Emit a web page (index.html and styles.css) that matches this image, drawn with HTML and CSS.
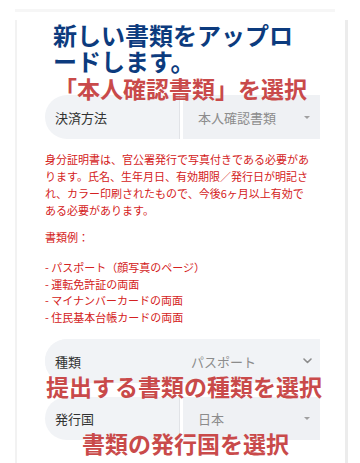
FILE: index.html
```html
<!DOCTYPE html>
<html lang="ja">
<head>
<meta charset="utf-8">
<title>書類アップロード</title>
<link rel="stylesheet" href="styles.css">
</head>
<body>
<div class="topline"></div>
<div class="card">
  <h1 class="title">新しい書類をアップロードします。</h1>

  <div class="row">
    <div class="label-cell with-divider">決済方法</div>
    <div class="select-cell gap">
      <span class="value">本人確認書類</span>
      <span class="caret"></span>
    </div>
  </div>

  <p class="note">身分証明書は、官公署発行で写真付きである必要があります。氏名、生年月日、有効期限／発行日が明記され、カラー印刷されたもので、今後6ヶ月以上有効である必要があります。</p>
  <p class="note heading">書類例：</p>
  <ul class="examples">
    <li>- パスポート（顔写真のページ）</li>
    <li>- 運転免許証の両面</li>
    <li>- マイナンバーカードの両面</li>
    <li>- 住民基本台帳カードの両面</li>
  </ul>

  <div class="row row-plain">
    <div class="label-cell">種類</div>
    <div class="select-cell plain">
      <span class="value">パスポート</span>
      <svg class="chevron" width="9" height="6" viewBox="0 0 9 6"><path d="M1 1 L4.5 4.5 L8 1" fill="none" stroke="#8c8c8c" stroke-width="1.6" stroke-linecap="round" stroke-linejoin="round"/></svg>
    </div>
  </div>

  <div class="row row-last">
    <div class="label-cell with-divider">発行国</div>
    <div class="select-cell gap">
      <span class="value">日本</span>
      <span class="caret"></span>
    </div>
  </div>

  <div class="annot annot-1">「本人確認書類」を選択</div>
  <div class="annot annot-2">提出する書類の種類を選択</div>
  <div class="annot annot-3">書類の発行国を選択</div>
</div>
</body>
</html>
```

FILE: styles.css
```css
html, body {
  margin: 0;
  padding: 0;
  background: #ffffff;
}

body {
  font-family: "Noto Sans CJK JP", "Noto Sans", sans-serif;
  width: 360px;
  height: 463px;
  overflow: hidden;
}

.topline {
  height: 3px;
  margin: 9px 25px 0 15px;
  background: #f6f6f6;
}

.card {
  position: relative;
  margin: 8px 12px 0 15px;
  border-left: 2px solid #f2f2f2;
  border-right: 3px solid #ececec;
  padding: 2px 25px 40px 28px;
}

.title {
  margin: 0 0 0 8px;
  width: 256px;
  font-size: 24px;
  line-height: 26px;
  font-weight: 700;
  color: #0c3b7e;
}

.row {
  display: flex;
  height: 44px;
  margin-top: 21px;
}

.row-plain {
  margin-top: 14px;
  background: #f1f3f6;
  border-radius: 22px 0 0 22px;
}

.row-last {
  margin-top: 14px;
  height: 43px;
}

.label-cell {
  width: 124px;
  padding-left: 10px;
  display: flex;
  align-items: center;
  font-size: 13px;
  color: #333333;
  background: #f1f3f6;
  border-radius: 22px 0 0 22px;
}

.label-cell.with-divider {
  border-right: 1px solid #e1e3e7;
}

.select-cell {
  flex: 1;
  display: flex;
  align-items: center;
  justify-content: space-between;
  background: #eff1f4;
  font-size: 13px;
  color: #8c8c8c;
}

.select-cell.gap {
  margin-left: 3px;
  padding: 0 10px 0 15px;
}

.select-cell.plain {
  padding: 0 8px 0 12px;
  background: transparent;
}

.caret {
  width: 0;
  height: 0;
  border-left: 3px solid transparent;
  border-right: 3px solid transparent;
  border-top: 3px solid #a0a0a0;
}

.chevron {
  display: block;
}

.note {
  margin: 12px 0 0 0;
  width: 267px;
  font-size: 11px;
  line-height: 17px;
  color: #d42121;
}

.note.heading {
  margin-top: 10px;
}

.examples {
  list-style: none;
  margin: 13px 0 0 0;
  padding: 0;
  font-size: 11px;
  line-height: 16.5px;
  color: #d42121;
}

.annot {
  position: absolute;
  font-size: 23px;
  line-height: 23px;
  font-weight: 700;
  color: #c94a4a;
  white-space: nowrap;
}

.annot-1 {
  left: 37px;
  top: 57px;
}

.annot-2 {
  left: 29px;
  top: 355px;
}

.annot-3 {
  left: 65px;
  top: 412px;
}
```
